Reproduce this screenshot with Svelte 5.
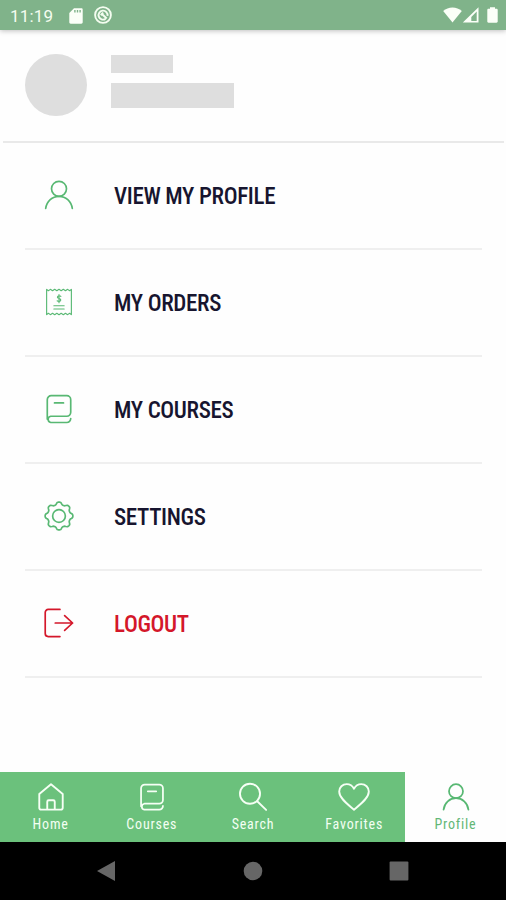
<script lang="ts">
    const menu = [
        { label: 'VIEW MY PROFILE', icon: 'user' },
        { label: 'MY ORDERS', icon: 'receipt' },
        { label: 'MY COURSES', icon: 'book' },
        { label: 'SETTINGS', icon: 'gear' },
        { label: 'LOGOUT', icon: 'logout' }
    ];

    const tabs = [
        { label: 'Home', icon: 'home' },
        { label: 'Courses', icon: 'book' },
        { label: 'Search', icon: 'search' },
        { label: 'Favorites', icon: 'heart' },
        { label: 'Profile', icon: 'user' }
    ];

    let active = $state('Profile');

    // closed outline with eight rounded teeth around the centre of a 32px box
    function gearPath(): string {
        const points: string[] = [];
        for (let i = 0; i <= 96; i++) {
            const a = (i / 96) * Math.PI * 2;
            const wave = Math.tanh(1.6 * Math.cos(8 * a)) / Math.tanh(1.6);
            const r = 13.5 + 1.3 * wave;
            points.push(`${(16 + r * Math.sin(a)).toFixed(2)} ${(16 - r * Math.cos(a)).toFixed(2)}`);
        }
        return 'M' + points.join('L') + 'Z';
    }
</script>

{#snippet icon(name: string)}
    <svg class="icon {name}" viewBox="0 0 32 32">
        {#if name === 'user'}
            <circle cx="16" cy="9.4" r="8" />
            <path d="M1.800 30.300C2.900 22.500 8.800 17.400 16 17.400s13.100 5.100 14.200 12.900" />
        {:else if name === 'receipt'}
            <path d="M2.800 3v26M29.200 3v26" />
            <path d="M2.800 2.500l1.800 1.500 2.200-1.500 2.300 1.500 2.300-1.500 2.300 1.500 2.300-1.500 2.300 1.500 2.300-1.500 2.300 1.500 2.300-1.500 2.200 1.500 1.800-1.500M2.800 29.500l1.800-1.500 2.200 1.500 2.300-1.500 2.300 1.500 2.300-1.500 2.300 1.500 2.300-1.500 2.300 1.500 2.300-1.500 2.300 1.500 2.200-1.500 1.800 1.500" />
            <path d="M16 8v8.800M18 10c-1-1-3.700-.8-3.700.9 0 1.800 3.600 1.100 3.600 3 0 1.700-2.700 1.900-3.900.8M10.500 20h11M10.500 23.500h11" />
        {:else if name === 'book'}
            <path d="M3.500 26.700V6a4.200 4.200 0 0 1 4.200-4.200h16.600A4.200 4.200 0 0 1 28.500 6v13.500a4.200 4.200 0 0 1-4.200 4.200H7.200a3.400 3.400 0 0 0 0 6.700h17.100a4.200 4.200 0 0 0 4.200-4.200M11.200 9.500h9.600" />
        {:else if name === 'gear'}
            <path d={gearPath()} />
            <circle cx="16" cy="16" r="6.800" />
        {:else if name === 'logout'}
            <path d="M17 1.500H4.500A3.200 3.200 0 0 0 1.300 4.700v22.600a3.200 3.200 0 0 0 3.200 3.200H17M12 16h18.500M22 8.200l8.500 7.800-8.500 7.800" />
        {:else if name === 'home'}
            <path d="M3.500 12.800L16 2.500l12.500 10.300v14.700a2 2 0 0 1-2 2h-21a2 2 0 0 1-2-2zM12 29.500V21a1.500 1.500 0 0 1 1.500-1.500h5A1.500 1.500 0 0 1 20 21v8.500" />
        {:else if name === 'search'}
            <circle cx="12.800" cy="12.500" r="10.700" />
            <path d="M20.500 20.500l9.500 9.300" />
        {:else if name === 'heart'}
            <path d="M16 29.500C10 24.500.2 17.500.2 10.200a8 8 0 0 1 8-8c3.500 0 6.300 2 7.800 5 1.500-3 4.300-5 7.800-5a8 8 0 0 1 8 8c0 7.300-9.800 14.300-15.800 19.300z" />
        {/if}
    </svg>
{/snippet}

<div class="screen">
    <div class="status">
        <span class="clock">11:19</span>
        <svg class="sd" viewBox="0 0 14 16">
            <path fill-rule="evenodd" d="M5 .3h7.300c.9 0 1.400.5 1.400 1.400v12.600c0 .9-.5 1.400-1.400 1.400H1.700c-.9 0-1.400-.5-1.400-1.400V5zM5.200 2v2.400h1.400V2zM7.800 2v2.400h1.400V2zM10.400 2v2.400h1.400V2z" />
        </svg>
        <svg class="badge" viewBox="0 0 18 18">
            <circle cx="9" cy="9" r="7.900" />
            <path d="M11.500 12.900A4.500 4.500 0 1 1 13.500 9.800M7.200 7.200l5.500 5.300M6.700 9.200l2.500-2.500" />
        </svg>
        <div class="signals">
            <svg width="19" height="16" viewBox="0 0 19 16"><path d="M.2 4C5.200-.7 13.800-.7 18.800 4L9.500 15.500z" /></svg>
            <svg width="17" height="16" viewBox="0 0 17 16">
                <path fill-rule="evenodd" d="M.8 15.600L16.500.2v15.400zM14.700 4.600L9.300 10v4h5.400z" />
            </svg>
            <svg class="battery" width="11" height="16" viewBox="0 0 11 16"><path d="M3 .3h5v1.400h1.500c.7 0 1.200.5 1.200 1.200v11.600c0 .7-.5 1.200-1.200 1.200h-8c-.7 0-1.200-.5-1.200-1.200V2.900c0-.7.5-1.200 1.200-1.200H3z" /></svg>
        </div>
    </div>

    <header>
        <div class="avatar"></div>
        <div class="lines">
            <div class="name"></div>
            <div class="email"></div>
        </div>
    </header>

    <ul class="menu">
        {#each menu as item}
            <li class:danger={item.icon === 'logout'}>
                {@render icon(item.icon)}
                <span>{item.label}</span>
            </li>
        {/each}
    </ul>

    <nav class="tabs">
        {#each tabs as tab}
            <button class:active={active === tab.label} onclick={() => (active = tab.label)}>
                {@render icon(tab.icon)}
                <span>{tab.label}</span>
            </button>
        {/each}
    </nav>

    <div class="system">
        <svg viewBox="0 0 20 22"><path d="M19 1v20L1 11z" /></svg>
        <svg viewBox="0 0 20 22"><circle cx="10" cy="11" r="9.300" /></svg>
        <svg viewBox="0 0 20 22"><rect x=".6" y="1.600" width="18.800" height="18.800" rx="1" /></svg>
    </div>
</div>

<style>
    :global(body) {
        margin: 0;
        background: #fff;
    }

    .screen {
        display: flex;
        flex-direction: column;
        width: 506px;
        height: 900px;
        overflow: hidden;
        background: #fefefe;
        font-family: 'Roboto Condensed', Roboto, sans-serif;
        font-stretch: 75%;
    }

    .status {
        display: flex;
        align-items: center;
        flex: none;
        box-sizing: border-box;
        height: 30px;
        padding: 1px 8px 0 10px;
        background: #80b38a;
        box-shadow: 0 1px 5px rgba(0, 0, 0, 0.25);
        fill: #fbfff8;
    }

    .clock {
        width: 59px;
        color: #f4fdf0;
        font: 17px Roboto, sans-serif;
        letter-spacing: 0.2px;
    }

    .sd {
        width: 14px;
        height: 16px;
    }

    .badge {
        width: 18px;
        height: 18px;
        margin: -1px 0 0 11px;
        fill: none;
        stroke: #f4fdf0;
        stroke-width: 1.9;
    }

    .signals {
        display: flex;
        margin: -1px 0 0 auto;
    }

    .battery {
        margin-left: 8px;
    }

    header {
        display: flex;
        flex: none;
        box-sizing: border-box;
        height: 113px;
        margin: 0 2px 0 3px;
        padding: 24px 22px 0;
        border-bottom: 2px solid #e9e9e9;
    }

    .avatar {
        width: 62px;
        height: 62px;
        border-radius: 50%;
        background: #dedede;
    }

    .lines {
        margin-left: 24px;
    }

    .name {
        width: 62px;
        height: 18px;
        margin-top: 1px;
        background: #dedede;
    }

    .email {
        width: 123px;
        height: 25px;
        margin-top: 10px;
        background: #dedede;
    }

    .menu {
        flex: 1;
        margin: 0;
        padding: 0 24px 0 25px;
        list-style: none;
    }

    .menu li {
        display: flex;
        align-items: center;
        box-sizing: border-box;
        height: 107px;
        padding-left: 19px;
        border-bottom: 2px solid #efefef;
        color: #17152f;
        font-size: 23px;
        font-weight: 480;
        letter-spacing: -0.35px;
    }

    .menu li.danger {
        color: #d4172a;
    }

    .menu span {
        margin-left: 40px;
        padding-top: 2px;
    }

    .icon {
        width: 30px;
        height: 30px;
        fill: none;
        stroke: #58b873;
        stroke-width: 1.8;
        stroke-linecap: round;
        stroke-linejoin: round;
    }

    .menu .icon {
        margin-bottom: 2px;
    }

    .menu .receipt {
        stroke-width: 1.2;
    }

    .danger .icon {
        stroke: #d4172a;
    }

    .tabs {
        display: grid;
        grid-template-columns: repeat(5, 1fr);
        flex: none;
        height: 70px;
    }

    .tabs button {
        display: flex;
        flex-direction: column;
        align-items: center;
        padding: 10px 0 0;
        border: 0;
        background: #6bc17c;
        color: #f3fff3;
        font-family: inherit;
        font-size: 14px;
        font-stretch: inherit;
        font-weight: 450;
        line-height: 16px;
        letter-spacing: 0.8px;
    }

    .tabs .icon {
        margin-bottom: 4px;
        stroke: #f6fff5;
        stroke-width: 2;
    }

    .tabs .book,
    .tabs .user {
        width: 28px;
        height: 28px;
        margin: 1px 0 5px 1px;
    }

    .tabs .heart {
        width: 32px;
    }

    .tabs button.active {
        background: #fefefe;
        color: #63b776;
    }

    .tabs .active .icon {
        stroke: #58b873;
    }

    .system {
        display: flex;
        align-items: center;
        justify-content: space-between;
        flex: none;
        height: 58px;
        padding: 0 97px 0 96px;
        background: #000;
        fill: #666;
    }

    .system svg {
        width: 20px;
        height: 22px;
    }
</style>
